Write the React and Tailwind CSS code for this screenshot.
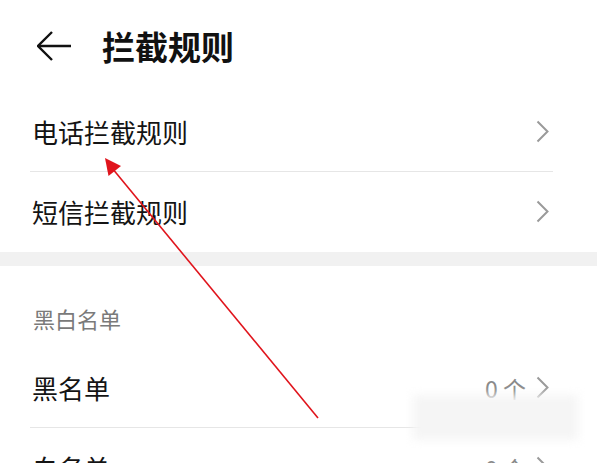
import React from 'react';

const font = { fontFamily: '"Noto Sans CJK SC", "Noto Sans", sans-serif' };

function Chevron() {
  return (
    <svg width="13" height="23" viewBox="0 0 13 23" className="shrink-0">
      <polyline points="1.5,1.5 11.5,11.5 1.5,21.5" fill="none" stroke="#9a9a9a" strokeWidth="2" />
    </svg>
  );
}

function Row({ label, value, divider = true }) {
  return (
    <div className="pl-[32px] pr-[48px]">
      <div className="flex items-center justify-between h-[79px]">
        <span className="text-[26px] leading-[30px] text-[#141414]">{label}</span>
        <div className="flex items-center gap-[10px]">
          {value && <span className="text-[23px] leading-[28px] text-[#8a8a8a]">{value}</span>}
          <Chevron />
        </div>
      </div>
      {divider && <div className="h-px bg-[#e6e6e6] -ml-[2px] -mr-[4px]" />}
    </div>
  );
}

export default function App() {
  return (
    <div className="relative w-[597px] h-[463px] overflow-hidden bg-white" style={font}>
      {/* 顶部标题 */}
      <div className="flex items-center h-[92px] pl-[37px]">
        <svg width="34" height="30" viewBox="0 0 34 30">
          <polyline points="15,1 1,15 15,29" fill="none" stroke="#111" strokeWidth="2.4" />
          <line x1="1" y1="15" x2="34" y2="15" stroke="#111" strokeWidth="2.4" />
        </svg>
        <h1 className="ml-[31px] text-[33px] leading-[36px] font-bold text-[#111]">拦截规则</h1>
      </div>

      <Row label="电话拦截规则" />
      <Row label="短信拦截规则" divider={false} />

      <div className="h-[14px] bg-[#f1f1f1] mt-px" />

      <div className="pl-[33px] pt-[40px] pb-[15px]">
        <span className="text-[22px] leading-[24px] text-[#7a7a7a]">黑白名单</span>
      </div>

      <Row label="黑名单" value="0 个" />
      <Row label="白名单" value="0 个" divider={false} />

      {/* 模糊水印 */}
      <div className="absolute left-[413px] top-[395px] w-[165px] h-[45px] bg-[#f5f5f5] blur-[5px]" />

      {/* 红色箭头标注 */}
      <svg className="absolute inset-0 pointer-events-none" width="597" height="463">
        <line x1="318" y1="418" x2="112" y2="168" stroke="#e0141c" strokeWidth="1.6" />
        <polygon points="105,158 108.5,176 121,166" fill="#e0141c" />
      </svg>
    </div>
  );
}
